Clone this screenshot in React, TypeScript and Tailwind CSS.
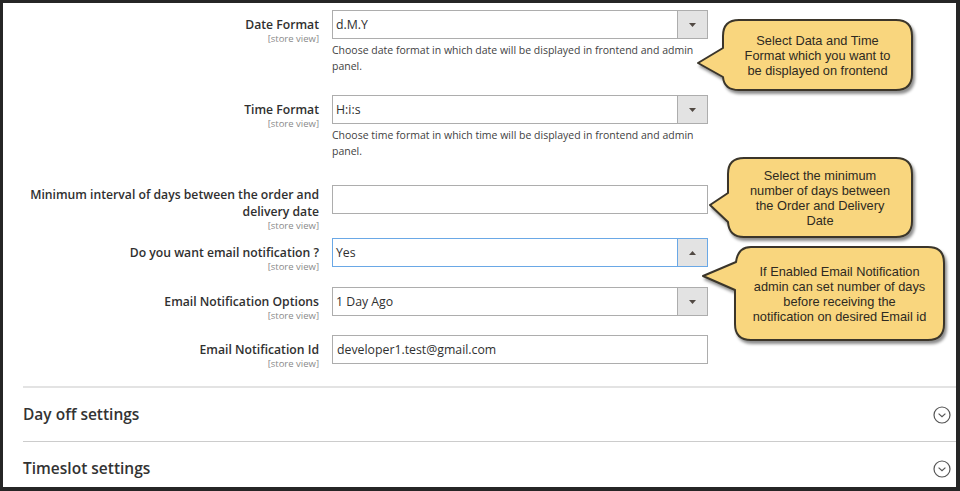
import clsx from "clsx";

const ui = { fontFamily: '"Open Sans", "Liberation Sans", Arial, sans-serif' };
const tip = { fontFamily: '"Liberation Sans", Arial, sans-serif' };

function Caret({ up = false }: { up?: boolean }) {
  return (
    <svg width="7" height="4" viewBox="0 0 7 4" aria-hidden="true">
      <path d={up ? "M0 4 L3.5 0 L7 4 Z" : "M0 0 L7 0 L3.5 4 Z"} fill="#514943" />
    </svg>
  );
}

function Select({ value, open = false }: { value: string; open?: boolean }) {
  return (
    <div
      className={clsx(
        "flex h-[29px] w-[376px] border bg-white",
        open ? "border-[#6aa8e6]" : "border-[#adadad]"
      )}
    >
      <span className="flex-1 pl-[3px] text-[12.3px] leading-[27px] text-[#303030]">{value}</span>
      <span
        className={clsx(
          "flex w-[30px] items-center justify-center border-l bg-[#e3e3e3]",
          open ? "border-[#6aa8e6]" : "border-[#adadad]"
        )}
      >
        <Caret up={open} />
      </span>
    </div>
  );
}

function TextInput({ value = "" }: { value?: string }) {
  return (
    <div className="h-[29px] w-[376px] border border-[#adadad] bg-white pl-[4px] text-[12.3px] leading-[27px] text-[#303030]">
      {value}
    </div>
  );
}

function Row({
  label,
  labelPad = "pt-[6px]",
  className,
  children
}: {
  label: React.ReactNode;
  labelPad?: string;
  className?: string;
  children: React.ReactNode;
}) {
  return (
    <div className={clsx("flex items-start", className)}>
      <div className={clsx("w-[316px] text-right", labelPad)}>
        <div className="text-[12.2px] font-semibold leading-[17px] text-[#303030]">{label}</div>
        <div className="text-[9.5px] leading-[11px] text-[#8a8a8a]">[store view]</div>
      </div>
      <div className="ml-[13px]">{children}</div>
    </div>
  );
}

function Note({ children }: { children: React.ReactNode }) {
  return <p className="mt-[3px] text-[10.5px] leading-[16px] text-[#3f3f3f]">{children}</p>;
}

function Callout({
  id,
  className,
  width,
  height,
  path,
  box,
  children
}: {
  id: string;
  className: string;
  width: number;
  height: number;
  path: string;
  box: string;
  children: React.ReactNode;
}) {
  return (
    <div className={clsx("absolute", className)}>
      <svg width={width} height={height} className="absolute left-0 top-0" aria-hidden="true">
        <defs>
          <filter id={id} x="-10%" y="-10%" width="125%" height="130%">
            <feDropShadow dx="2" dy="3" stdDeviation="1.6" floodColor="#000" floodOpacity="0.45" />
          </filter>
        </defs>
        <path d={path} fill="#f9d67e" stroke="#3a362b" strokeWidth="2" strokeLinejoin="round" filter={`url(#${id})`} />
      </svg>
      <div
        className={clsx("absolute flex flex-col items-center justify-center text-center text-[12.8px] leading-[15px] text-[#2e2a22]", box)}
        style={tip}
      >
        {children}
      </div>
    </div>
  );
}

function SectionHeader({ title }: { title: string }) {
  return (
    <div className="flex h-[54px] items-center justify-between border-b border-[#cccccc] pr-[5px]">
      <span className="text-[15.5px] font-semibold text-[#333333]">{title}</span>
      <svg width="18" height="18" viewBox="0 0 18 18" aria-hidden="true">
        <circle cx="9" cy="9" r="8" fill="none" stroke="#555" strokeWidth="1.2" />
        <path d="M5.6 7.6 L9 10.6 L12.4 7.6" fill="none" stroke="#555" strokeWidth="1.2" />
      </svg>
    </div>
  );
}

export default function App() {
  return (
    <div
      className="relative h-[491px] w-[960px] overflow-hidden border-b-[4px] border-l-[3px] border-r-[4px] border-t-[3px] border-[#262626] bg-white"
      style={ui}
    >
      <Row label="Date Format" className="mt-[7px]">
        <Select value="d.M.Y" />
        <Note>
          Choose date format in which date will be displayed in frontend and admin
          <br />
          panel.
        </Note>
      </Row>

      <Row label="Time Format" className="mt-[21px]">
        <Select value="H:i:s" />
        <Note>
          Choose time format in which time will be displayed in frontend and admin
          <br />
          panel.
        </Note>
      </Row>

      <Row
        label={
          <>
            Minimum interval of days between the order and
            <br />
            delivery date
          </>
        }
        labelPad="pt-[1px]"
        className="mt-[26px]"
      >
        <TextInput />
      </Row>

      <Row label="Do you want email notification ?" className="mt-[7px]">
        <Select value="Yes" open />
      </Row>

      <Row label="Email Notification Options" className="mt-[15px]">
        <Select value="1 Day Ago" />
      </Row>

      <Row label="Email Notification Id" className="mt-[14px]">
        <TextInput value="developer1.test@gmail.com" />
      </Row>

      <div className="ml-[20px] mt-[17px] border-t-2 border-[#e3e3e3]">
        <SectionHeader title="Day off settings" />
        <SectionHeader title="Timeslot settings" />
      </div>

      <Callout
        id="tip-format"
        className="left-[693px] top-[15px]"
        width={226}
        height={82}
        path="M43 2 H200 Q216 2 216 18 V56 Q216 72 200 72 H43 Q28 72 27 59 L2 45 L27 30 V18 Q27 2 43 2 Z"
        box="left-[27px] top-[2px] h-[70px] w-[189px]"
      >
        Select Data and Time
        <br />
        Format which you want to
        <br />
        be displayed on frontend
      </Callout>

      <Callout
        id="tip-interval"
        className="left-[703px] top-[153px]"
        width={216}
        height={90}
        path="M38 2 H190 Q206 2 206 18 V65 Q206 81 190 81 H38 Q23 81 22 66 L4 49 L22 37 V18 Q22 2 38 2 Z"
        box="left-[22px] top-[2px] h-[79px] w-[184px]"
      >
        Select the minimum
        <br />
        number of days between
        <br />
        the Order and Delivery
        <br />
        Date
      </Callout>

      <Callout
        id="tip-email"
        className="left-[697px] top-[242px]"
        width={254}
        height={104}
        path="M51 2 H228 Q244 2 244 18 V79 Q244 95 228 95 H51 Q35 95 35 79 V45 L3 31 L36 17 Q38 2 51 2 Z"
        box="left-[35px] top-[2px] h-[93px] w-[209px]"
      >
        If Enabled Email Notification
        <br />
        admin can set number of days
        <br />
        before receiving the
        <br />
        notification on desired Email id
      </Callout>
    </div>
  );
}
